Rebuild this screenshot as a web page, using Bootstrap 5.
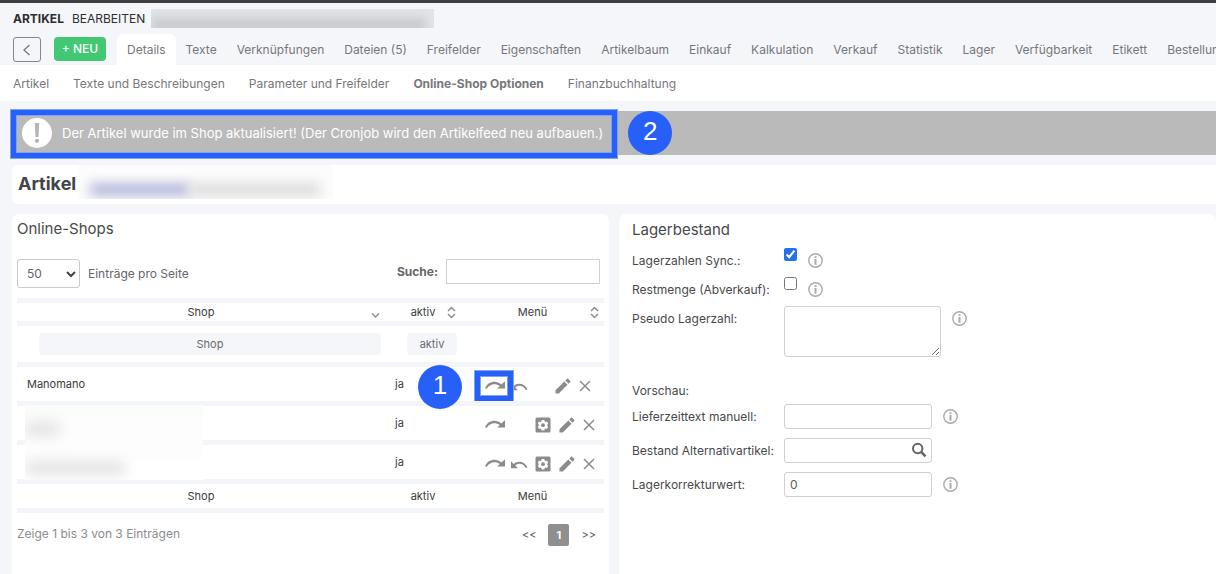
<!DOCTYPE html>
<html lang="de">
<head>
<meta charset="utf-8">
<meta name="viewport" content="width=device-width, initial-scale=1">
<title>Artikel bearbeiten</title>
<link href="https://cdn.jsdelivr.net/npm/bootstrap@5.3.0/dist/css/bootstrap.min.css" rel="stylesheet">
<style>
  body { font-family: Inter, "Liberation Sans", sans-serif; font-size: 12px; line-height: 18px; color: #48494b; background: #f5f6fa; overflow: hidden; }
  .app-head { border-top: 3px solid #3f3f41; }
  .crumb { height: 31px; color: #2d2e30; padding-left: 13px; }
  .redacted { position: relative; overflow: hidden; }
  .redacted i { position: absolute; filter: blur(5px); }
  .redacted-head { width: 283px; height: 19px; margin-left: 6px; background: #e3e4e7; }
  .redacted-head i { left: 0; right: 8px; top: 9px; height: 14px; background: #c9cacd; }
  .toolbar { height: 31px; padding-left: 13px; }
  .btn-back { width: 28px; height: 25px; padding: 0; border: 1px solid #85868a; border-radius: 3px; background: transparent; line-height: 1; }
  .btn-neu { width: 52px; height: 24px; padding: 0; margin-left: 13px; font-size: 12px; font-weight: 500; color: #fff; background: #42c773; border: 0; border-radius: 4px; }
  .btn-neu:hover, .btn-neu:active { color: #fff; background: #37b365; }
  .toolbar .tools { padding-top: 3px; }
  .main-tabs { margin-left: 11px; height: 31px; --bs-nav-link-font-size: 12px; }
  .main-tabs .nav-link { padding: 7px 10px 6px; color: #76777a; line-height: 18px; border-radius: 6px 6px 0 0; white-space: nowrap; }
  .main-tabs .nav-link.active { background: #fff; }
  .sub-tabs { height: 36px; padding: 2px 0 0 13px; gap: 24px; background: #fff; }
  .sub-tabs a { color: #76777a; text-decoration: none; white-space: nowrap; }
  .content-area { padding: 10px 0 0 12px; }
  .notice { height: 44px; background: #bababa; color: #fff; }
  .notice-msg { position: relative; height: 44px; padding: 0 13px 0 10px; gap: 10px; font-size: 13px; }
  .marked::after { content: ""; position: absolute; border: 5px solid #2660f8; outline: 1px solid #7ba4ee; box-shadow: inset 0 0 0 1px #7ba4ee; }
  .notice-msg::after { inset: -1px -1px -3px; }
  .step { width: 44px; height: 44px; padding-bottom: 4px; border-radius: 50%; background: #2660f8; color: #fff; font: 26px/1 "Liberation Sans", Arial, sans-serif; }
  .notice .step { margin-left: 12px; }
  .panel { background: #fff; }
  .title-panel { height: 39px; margin-top: 10px; padding-left: 6px; border-radius: 6px 0 0 6px; }
  .title-panel h1 { font-size: 18px; line-height: 24px; font-weight: 700; color: #434446; padding-top: 7px; }
  .redacted-title { width: 255px; height: 34px; margin-left: 2px; background: #fcfcfc; }
  .redacted-title i { top: 18px; height: 13px; filter: blur(6px); }
  .redacted-title .id { left: 12px; width: 100px; background: #b5b8dc; }
  .redacted-title .nm { left: 112px; width: 130px; background: #dcdcdc; }
  .columns { margin-top: 10px; gap: 10px; display: grid; grid-template-columns: minmax(0, 1fr) minmax(0, 1fr); }
  .columns > section { border-radius: 7px 7px 0 0; }
  h2 { font-size: 15px; line-height: 20px; font-weight: 400; color: #48494b; }
  .shops { padding: 5px 5px 0; }
  .len { width: 63px; height: 29px; padding: 0 18px 0 9px; font-size: 12px; color: #65666a; border: 1px solid #c9cacc; border-radius: 3px; background-position: right 3px center; background-size: 10px 10px; background-image: url("data:image/svg+xml,%3csvg xmlns='http://www.w3.org/2000/svg' viewBox='0 0 10 10'%3e%3cpath d='M1 3l4 4 4-4' fill='none' stroke='%23444' stroke-width='2'/%3e%3c/svg%3e"); }
  .box { height: 25px; padding: 0 5px; font-size: 12px; color: #5a5b5e; border: 1px solid #cfd0d2; border-radius: 3px; background: #fff; }
  .search-box { width: 154px; border-radius: 0; }
  .lbl-muted { color: #65666a; }
  .shop-table { table-layout: fixed; margin: 10px 0 0; font-size: 11px; line-height: 16px; border-collapse: separate; border-spacing: 0; color: #3a3b3d; width: 100%; }
  .shop-table th, .shop-table td { border-top: 5px solid #f3f5f8; padding: 0; position: relative; vertical-align: middle; }
  .shop-table th { font-weight: 400; text-align: center; }
  .shop-table tfoot th { border-bottom: 5px solid #f3f5f8; height: 34px; }
  .c-aktiv { width: 76px; } .c-menu { width: 143px; }
  .h-row th { height: 23px; }
  .f-row th { height: 41px; }
  .f-row th:not(:last-child) { padding: 0 4px 0 22px; }
  .s-row td { height: 39px; }
  .s-row .cell { display: block; padding-left: 10px; }
  .sort { position: absolute; right: 5px; top: 3px; }
  .filter { display: block; height: 22px; padding: 0; font-size: 11px; text-align: center; color: #6a6b6e; border: 0; border-radius: 3px; background: #f4f6fa; }
  .filter::placeholder { color: #6a6b6e; opacity: 1; }
  .acts { padding: 3px 9px 0 23px; }
  .acts button { padding: 0; border: 0; background: none; color: #8b8b8b; line-height: 0; }
  .acts .marked { position: relative; }
  .acts .marked::after { inset: -6px -7px -6px -9px; }
  .s-row .step { position: absolute; left: 33px; top: -2px; z-index: 2; }
  .redacted-rows { position: absolute; left: 8px; top: -1px; width: 178px; height: 75px; z-index: 1; background: linear-gradient(#fafbfb, #fdfdfd 20px, #fdfdfd 53px, #fff 54px); }
  .redacted-rows i { left: 0; height: 12px; background: #dedede; filter: blur(7px); }
  .pager { padding-top: 11px; }
  .pager .sum { color: #8b8c8e; margin-top: -3px; }
  .pager a { color: #58595c; text-decoration: none; font-size: 11px; }
  .pager .cur { width: 21px; height: 22px; margin: 0 12px; color: #fff; background: #8f8f8f; border-radius: 2px; font-weight: 700; line-height: 22px; text-align: center; }
  .stock { padding: 6px 13px 0; }
  .stock h2 { margin-bottom: 6px; }
  .f-line { display: flex; align-items: flex-start; }
  .f-line > label, .f-line > .lbl { width: 152px; flex: none; line-height: 18px; padding-top: 6px; }
  .f-check { height: 29px; }
  .f-check input { width: 13px; height: 13px; margin: 2px 0 0; accent-color: #2272ee; }
  .f-check .info { margin-top: 7px; }
  .f-area { height: 72px; }
  .f-area textarea { width: 157px; height: 51px; margin-top: 2px; resize: both; }
  .f-area .info { margin-top: 7px; }
  .f-text { height: 34px; }
  .f-text > label { padding-top: 4px; }
  .f-text .box { width: 148px; }
  .f-text .info { margin-top: 5px; }
  .info { width: 15px; height: 15px; margin-left: 11px; flex: none; }
  .lookup { position: relative; }
  .lookup button { position: absolute; right: 5px; top: 4px; padding: 0; border: 0; background: none; line-height: 0; }
</style>
</head>
<body class="min-vh-100 d-flex flex-column">
<svg class="d-none" aria-hidden="true">
  <symbol id="i-info" viewBox="0 0 15 15"><circle cx="7.500" cy="7.500" r="6.700" fill="none" stroke="#a9a9a9" stroke-width="1.400"/><path d="M6.500 3.200h2v1.900h-2zM6.500 6h2v5.800h-2z" fill="#a9a9a9"/></symbol>
  <symbol id="i-redo" viewBox="0 0 22 18"><path d="M1 11.200C4 4 12.500 2.800 17.200 7.600L21 4.200V11.500H13.200L15.800 9C11.500 5.800 5.500 6.800 2.800 11.800z" fill="currentColor"/></symbol>
  <symbol id="i-undo" viewBox="0 0 18 18"><path d="M17.500 12.400C14.800 6.300 8 5.100 3.700 9L1 6.200V13.200H8L5.200 10.500C8.800 7.500 13.500 8.600 15.700 13z" fill="currentColor"/></symbol>
  <symbol id="i-gear" viewBox="0 0 16 16"><path fill-rule="evenodd" fill="currentColor" d="M2 .5h12A1.500 1.500 0 0 1 15.500 2v12a1.500 1.500 0 0 1-1.500 1.500H2A1.500 1.500 0 0 1 .5 14V2A1.500 1.500 0 0 1 2 .5zM6.700 3l-.4 1.400-.8.500-1.500-.4-1.200 2.200 1 1v1l-1 1L4 12l1.500-.4.8.400.4 1.500h2.600l.4-1.500.8-.400 1.500.4 1.200-2.300-1-1v-1l1-1L12 4.500l-1.500.4-.8-.5L9.300 3z"/><circle cx="8" cy="8.200" r="1.900" fill="currentColor"/></symbol>
  <symbol id="i-pen" viewBox="0 0 16 16"><path fill="currentColor" d="M.5 15.500v-3.300l8.800-8.700 3.200 3.200-8.700 8.800zM10.300 2.500l1.500-1.600c.5-.5 1-.5 1.500 0l1.800 1.800c.5.500.5 1 0 1.500l-1.600 1.500z"/></symbol>
  <symbol id="i-x" viewBox="0 0 12 12"><path d="M1 1l10 10M11 1L1 11" stroke="currentColor" stroke-width="1.500" fill="none"/></symbol>
  <symbol id="i-sort" viewBox="0 0 9 13"><path d="M1 5l3.500-3.500L8 5M1 8l3.500 3.500L8 8" stroke="#8d8e90" stroke-width="1.500" fill="none"/></symbol>
</svg>

<header class="app-head">
  <div class="crumb d-flex align-items-center"><strong>ARTIKEL</strong><span class="ms-2">BEARBEITEN</span><span class="redacted redacted-head"><i></i></span></div>
  <div class="toolbar d-flex align-items-start overflow-hidden">
    <div class="tools d-flex flex-shrink-0">
      <button class="btn-back" type="button" aria-label="Zurück"><svg width="10" height="14" viewBox="0 0 10 14"><path d="M7.500 2L2 7l5.500 5" fill="none" stroke="#76777a" stroke-width="1.300"/></svg></button>
      <button class="btn btn-neu" type="button">+ NEU</button>
    </div>
    <nav class="nav main-tabs flex-nowrap" aria-label="Hauptreiter">
      <a class="nav-link active" href="#">Details</a><a class="nav-link" href="#">Texte</a><a class="nav-link" href="#">Verknüpfungen</a><a class="nav-link" href="#">Dateien (5)</a><a class="nav-link" href="#">Freifelder</a><a class="nav-link" href="#">Eigenschaften</a><a class="nav-link" href="#">Artikelbaum</a><a class="nav-link" href="#">Einkauf</a><a class="nav-link" href="#">Kalkulation</a><a class="nav-link" href="#">Verkauf</a><a class="nav-link" href="#">Statistik</a><a class="nav-link" href="#">Lager</a><a class="nav-link" href="#">Verfügbarkeit</a><a class="nav-link" href="#">Etikett</a><a class="nav-link" href="#">Bestellung</a>
    </nav>
  </div>
  <nav class="sub-tabs d-flex align-items-center" aria-label="Unterreiter">
    <a href="#">Artikel</a><a href="#">Texte und Beschreibungen</a><a href="#">Parameter und Freifelder</a><a href="#" class="fw-bold">Online-Shop Optionen</a><a href="#">Finanzbuchhaltung</a>
  </nav>
</header>

<main class="content-area flex-fill d-flex flex-column">
  <div class="notice d-flex align-items-center" role="status">
    <div class="notice-msg marked d-flex align-items-center">
      <svg width="30" height="30" viewBox="0 0 30 30"><circle cx="15" cy="15" r="15" fill="#fff"/><path d="M12.800 5h4.400l-.7 14h-3z" fill="#b5b5b5"/><circle cx="15" cy="22.800" r="2.100" fill="#b5b5b5"/></svg>
      <span>Der Artikel wurde im Shop aktualisiert! (Der Cronjob wird den Artikelfeed neu aufbauen.)</span>
    </div>
    <span class="step d-flex align-items-center justify-content-center flex-shrink-0">2</span>
  </div>

  <div class="panel title-panel d-flex align-items-start"><h1 class="m-0">Artikel</h1><span class="redacted redacted-title"><i class="id"></i><i class="nm"></i></span></div>

  <div class="columns flex-fill">
    <section class="panel shops">
      <h2 class="m-0">Online-Shops</h2>
      <div class="d-flex align-items-start justify-content-between mt-3 pt-1">
        <div class="d-flex align-items-center gap-2"><select id="len" class="form-select len"><option>50</option></select><label for="len" class="lbl-muted">Einträge pro Seite</label></div>
        <div class="d-flex align-items-center me-1"><label for="q" class="fw-bold me-2 lbl-muted">Suche:</label><input id="q" class="box search-box" type="search"></div>
      </div>
      <table class="shop-table">
        <colgroup><col><col class="c-aktiv"><col class="c-menu"></colgroup>
        <thead>
          <tr class="h-row"><th>Shop<svg class="sort" width="9" height="13" viewBox="0 0 9 13"><path d="M1 7.500L4.500 11 8 7.500" stroke="#8d8e90" stroke-width="1.500" fill="none"/></svg></th><th>aktiv<svg class="sort" width="9" height="13"><use href="#i-sort"/></svg></th><th>Menü<svg class="sort" width="9" height="13"><use href="#i-sort"/></svg></th></tr>
          <tr class="f-row"><th><input class="filter w-100" aria-label="Shop filtern" placeholder="Shop"></th><th><input class="filter w-100" aria-label="aktiv filtern" placeholder="aktiv"></th><th></th></tr>
        </thead>
        <tbody>
          <tr class="s-row"><td><span class="cell">Manomano</span></td><td><span class="cell">ja</span><span class="step d-flex align-items-center justify-content-center">1</span></td>
            <td><div class="acts d-flex align-items-center"><button class="marked" type="button" aria-label="Übertragen"><svg width="22" height="18"><use href="#i-redo"/></svg></button><button class="ms-1" type="button" aria-label="Abrufen"><svg width="18" height="18"><use href="#i-undo"/></svg></button><button class="ms-auto" type="button" aria-label="Bearbeiten"><svg width="16" height="16"><use href="#i-pen"/></svg></button><button class="ms-2 me-1" type="button" aria-label="Löschen"><svg width="12" height="12"><use href="#i-x"/></svg></button></div></td></tr>
          <tr class="s-row"><td><span class="redacted redacted-rows d-block"><i style="top:18px;width:34px"></i><i style="top:57px;width:100px"></i></span></td><td><span class="cell">ja</span></td>
            <td><div class="acts d-flex align-items-center"><button type="button" aria-label="Übertragen"><svg width="22" height="18"><use href="#i-redo"/></svg></button><button class="ms-auto" type="button" aria-label="Einstellungen"><svg width="16" height="16"><use href="#i-gear"/></svg></button><button class="ms-2" type="button" aria-label="Bearbeiten"><svg width="16" height="16"><use href="#i-pen"/></svg></button><button class="ms-2" type="button" aria-label="Löschen"><svg width="12" height="12"><use href="#i-x"/></svg></button></div></td></tr>
          <tr class="s-row"><td></td><td><span class="cell">ja</span></td>
            <td><div class="acts d-flex align-items-center"><button type="button" aria-label="Übertragen"><svg width="22" height="18"><use href="#i-redo"/></svg></button><button class="ms-1" type="button" aria-label="Abrufen"><svg width="18" height="18"><use href="#i-undo"/></svg></button><button class="ms-auto" type="button" aria-label="Einstellungen"><svg width="16" height="16"><use href="#i-gear"/></svg></button><button class="ms-2" type="button" aria-label="Bearbeiten"><svg width="16" height="16"><use href="#i-pen"/></svg></button><button class="ms-2" type="button" aria-label="Löschen"><svg width="12" height="12"><use href="#i-x"/></svg></button></div></td></tr>
        </tbody>
        <tfoot><tr><th>Shop</th><th>aktiv</th><th>Menü</th></tr></tfoot>
      </table>
      <div class="d-flex align-items-center justify-content-between pager">
        <span class="sum">Zeige 1 bis 3 von 3 Einträgen</span>
        <nav class="d-flex align-items-center me-2" aria-label="Seiten"><a href="#">&lt;&lt;</a><a href="#" class="cur">1</a><a href="#">&gt;&gt;</a></nav>
      </div>
    </section>

    <section class="panel stock">
      <h2>Lagerbestand</h2>
      <div class="f-line f-check"><label for="sync">Lagerzahlen Sync.:</label><input id="sync" type="checkbox" checked><svg class="info"><use href="#i-info"/></svg></div>
      <div class="f-line f-check"><label for="rest">Restmenge (Abverkauf):</label><input id="rest" type="checkbox"><svg class="info"><use href="#i-info"/></svg></div>
      <div class="f-line f-area"><label for="pseudo">Pseudo Lagerzahl:</label><textarea id="pseudo" class="box"></textarea><svg class="info"><use href="#i-info"/></svg></div>
      <div class="f-line mb-1"><span class="lbl">Vorschau:</span></div>
      <div class="f-line f-text"><label for="lz">Lieferzeittext manuell:</label><input id="lz" class="box" type="text"><svg class="info"><use href="#i-info"/></svg></div>
      <div class="f-line f-text"><label for="alt">Bestand Alternativartikel:</label><span class="lookup"><input id="alt" class="box" type="text"><button type="button" aria-label="Suchen"><svg width="16" height="16" viewBox="0 0 16 16"><circle cx="6.700" cy="6.500" r="4.700" fill="none" stroke="#666" stroke-width="2"/><path d="M10.200 10l4.300 4.300" stroke="#666" stroke-width="2.500"/></svg></button></span></div>
      <div class="f-line f-text"><label for="korr">Lagerkorrekturwert:</label><input id="korr" class="box" type="text" value="0"><svg class="info"><use href="#i-info"/></svg></div>
    </section>
  </div>
</main>
<script src="https://cdn.jsdelivr.net/npm/bootstrap@5.3.0/dist/js/bootstrap.bundle.min.js"></script>
</body>
</html>
